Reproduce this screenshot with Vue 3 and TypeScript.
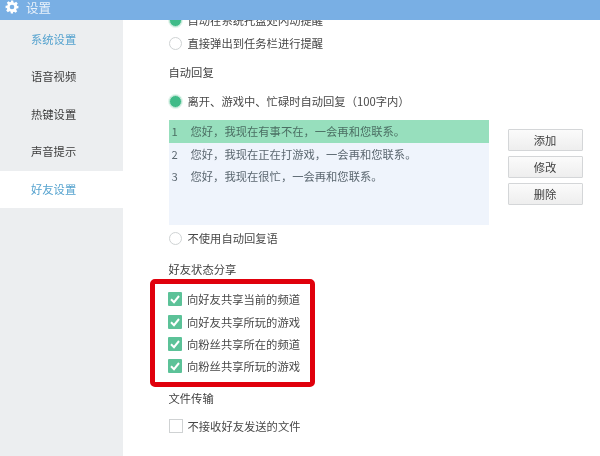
<script setup lang="ts">
const navItems = [
  { label: '系统设置', state: 'accent' },
  { label: '语音视频', state: '' },
  { label: '热键设置', state: '' },
  { label: '声音提示', state: '' },
  { label: '好友设置', state: 'active' },
]
const replies = ['您好，我现在有事不在，一会再和您联系。', '您好，我现在正在打游戏，一会再和您联系。', '您好，我现在很忙，一会再和您联系。']
const shares = ['向好友共享当前的频道', '向好友共享所玩的游戏', '向粉丝共享所在的频道', '向粉丝共享所玩的游戏']
const actions = ['添加', '修改', '删除']
</script>

<template>
  <div class="window">
    <header class="titlebar">
      <svg class="gear" viewBox="0 0 24 24" width="14" height="14" aria-hidden="true">
        <path fill="#fff" fill-rule="evenodd" d="M10 1h4l.6 3.1 1.9.8 2.6-1.8 2.8 2.8-1.8 2.6.8 1.9L23 10v4l-3.1.6-.8 1.9 1.8 2.6-2.8 2.8-2.6-1.8-1.9.8L14 23h-4l-.6-3.1-1.9-.8-2.6 1.8-2.8-2.8 1.8-2.6-.8-1.9L1 14v-4l3.1-.6.8-1.9-1.8-2.6 2.8-2.8 2.6 1.8 1.9-.8zM12 8a4 4 0 1 0 0 8 4 4 0 0 0 0-8z" />
      </svg>
      <span class="title">设置</span>
    </header>
    <div class="body">
      <nav class="sidebar">
        <div v-for="item in navItems" :key="item.label" class="nav-item" :class="item.state">{{ item.label }}</div>
      </nav>
      <main class="content">
        <div class="clip-row option"><i class="radio on"></i>自动在系统托盘处闪动提醒</div>
        <div class="option second"><i class="radio"></i>直接弹出到任务栏进行提醒</div>
        <div class="heading reply-heading">自动回复</div>
        <div class="option reply-on"><i class="radio on"></i>离开、游戏中、忙碌时自动回复（100字内）</div>
        <div class="reply-row">
          <ol class="reply-list">
            <li v-for="(text, i) in replies" :key="i" :class="{ selected: i === 0 }">
              <span class="num">{{ i + 1 }}</span>{{ text }}
            </li>
          </ol>
          <div class="actions">
            <button v-for="a in actions" :key="a" type="button">{{ a }}</button>
          </div>
        </div>
        <div class="option reply-off"><i class="radio"></i>不使用自动回复语</div>
        <div class="heading share-heading">好友状态分享</div>
        <div class="share-box">
          <div v-for="s in shares" :key="s" class="check-row">
            <svg class="check" viewBox="0 0 14 14" width="14" height="14" aria-hidden="true">
              <rect width="14" height="14" rx="1" fill="#5cc298" />
              <path d="M3 7.2l3 3 5-6.2" fill="none" stroke="#fff" stroke-width="2" />
            </svg>
            {{ s }}
          </div>
        </div>
        <div class="heading file-heading">文件传输</div>
        <div class="check-row file-row"><i class="box"></i>不接收好友发送的文件</div>
      </main>
    </div>
  </div>
</template>

<style>
html, body { margin: 0; background: #fff; }
</style>

<style scoped>
.window {
  width: 600px;
  height: 456px;
  overflow: hidden;
  display: flex;
  flex-direction: column;
  background: #fff;
  color: #484848;
  font: 11.3px/18px "Noto Sans CJK SC", "Liberation Sans", sans-serif;
  filter: blur(0.35px);
}
.titlebar {
  flex: none;
  position: relative;
  z-index: 1;
  box-sizing: border-box;
  height: 20px;
  background: #79afe4;
  color: #e8f1fa;
  display: flex;
  align-items: flex-start;
  gap: 7px;
  padding-left: 5px;
  font-size: 12.5px;
  line-height: 14px;
}
.gear { flex: none; }
.title { margin-top: 1px; }
.body { flex: 1; display: flex; min-height: 0; }
.sidebar {
  flex: none;
  width: 123px;
  padding-top: 0.5px;
  background: #eceef0;
}
.nav-item {
  height: 37.5px;
  line-height: 37.5px;
  padding-left: 31px;
  color: #3d3d3d;
}
.nav-item.accent { color: #56a3cf; }
.nav-item.active { background: #fff; color: #56a3cf; }
.content { flex: 1; padding-left: 45.5px; min-width: 0; }
.option { display: flex; align-items: center; gap: 6px; height: 18px; }
.clip-row { margin-top: -9px; }
.second { margin-top: 5px; }
.heading { color: #3f3f3f; height: 18px; }
.reply-heading { margin-top: 11px; }
.reply-on { margin-top: 11px; }
.radio {
  flex: none;
  box-sizing: border-box;
  width: 13px;
  height: 13px;
  border-radius: 50%;
  border: 1px solid #cfd3d4;
  background: #fff;
}
.radio.on {
  background: #3fbb88;
  border-color: #bfe8d6;
  box-shadow: 0 0 0 1px #e3f5ed;
}
.reply-row { display: flex; margin-top: 10px; }
.reply-list {
  list-style: none;
  margin: 0;
  padding: 0;
  width: 320px;
  height: 105px;
  background: #eff4fc;
  color: #5b6770;
  flex: none;
}
.reply-list li { height: 22.5px; line-height: 22.5px; padding-left: 3px; white-space: nowrap; }
.reply-list li.selected { background: #97dfbd; color: #4b6f63; }
.num { display: inline-block; width: 19px; }
.actions {
  display: flex;
  flex-direction: column;
  gap: 5px;
  margin: 9px 0 0 19px;
}
.actions button {
  box-sizing: border-box;
  width: 75px;
  height: 22px;
  padding: 0;
  border: 1px solid #d4d6d8;
  border-radius: 1px;
  background: linear-gradient(#fbfbfb, #eeeeee);
  color: #3d3d3d;
  font: inherit;
}
.reply-off { margin-top: 4px; }
.share-heading { margin-top: 13px; }
.share-box {
  box-sizing: border-box;
  width: 165px;
  height: 108px;
  margin: 1px 0 0 -19px;
  padding: 4px 0 0 13.5px;
  border: 5px solid #e0000c;
  border-radius: 5px;
}
.check-row { display: flex; align-items: center; gap: 5px; height: 22.4px; white-space: nowrap; }
.check { flex: none; }
.heading.file-heading { margin-top: 2px; }
.file-row { margin-top: 8px; }
.box {
  flex: none;
  box-sizing: border-box;
  width: 14px;
  height: 14px;
  border: 1px solid #cfd2d3;
  background: #fff;
}
</style>
